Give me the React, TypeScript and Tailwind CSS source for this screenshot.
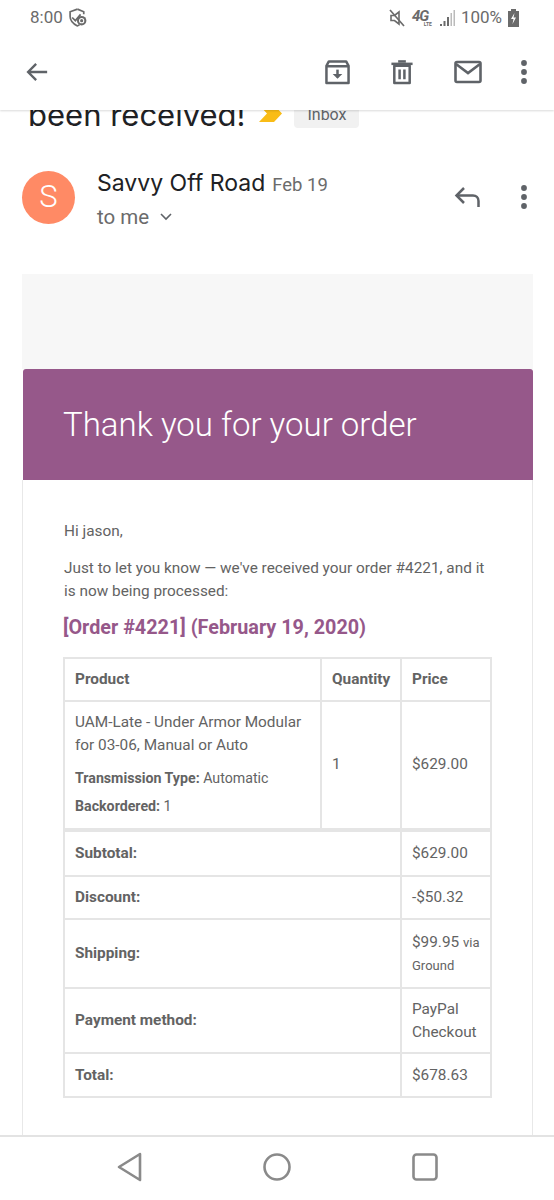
import React from 'react';

const Dots = () => (
  <svg width="24" height="28" viewBox="0 0 24 28" className="fill-[#5f6368]">
    <circle cx="12" cy="5" r="2.9" />
    <circle cx="12" cy="14" r="2.9" />
    <circle cx="12" cy="23" r="2.9" />
  </svg>
);

const StatusBar = () => (
  <div className="flex h-[34px] items-center justify-between pl-[30px] pr-[35px] pt-[1px] text-[17px] text-[#6b6b6b]">
    <div className="flex items-center gap-[5px]">
      <span>8:00</span>
      <svg width="21" height="21" viewBox="0 0 20 20" fill="none" stroke="#6b6b6b" strokeWidth="1.6">
        <path d="M9 2 L2 4.5 V9 C2 13 5 16 9 18 L11 17" />
        <path d="M9 2 L15 4.5 V7" />
        <path d="M4 10 L7 13 L12 7" />
        <circle cx="13" cy="13" r="4.5" fill="#6b6b6b" stroke="none" />
        <circle cx="13" cy="13" r="2" stroke="#fff" strokeWidth="1" />
      </svg>
    </div>
    <div className="flex items-center">
      <svg width="18" height="18" viewBox="0 0 18 18" fill="none" stroke="#6b6b6b" strokeWidth="1.6" className="mr-[6px]">
        <path d="M2 1 L16 17" />
        <path d="M11 3 L6.5 6.5 H3 V11.5 H6.5 L11 15 Z" />
      </svg>
      <div className="mr-[8px] mt-[3px] flex w-[20px] flex-col items-start text-[#6b6b6b]">
        <span className="text-[15px] font-bold italic leading-[11px] tracking-[-1px]">4G</span>
        <span className="self-end text-[5px] font-bold leading-[5px]">LTE</span>
      </div>
      <svg width="16" height="18" viewBox="0 0 16 18" className="mr-[5px] fill-[#6b6b6b]">
        <rect x="0" y="15" width="2" height="2" />
        <rect x="3.5" y="12" width="2" height="5" />
        <rect x="7" y="8" width="2" height="9" />
        <rect x="10.5" y="4" width="1.5" height="13" fill="#bbb" />
        <rect x="13.5" y="1" width="1.5" height="16" fill="#bbb" />
      </svg>
      <span className="mr-[6px]">100%</span>
      <svg width="11" height="18" viewBox="0 0 11 18">
        <path d="M3 0 H8 V2 H11 V18 H0 V2 H3 Z" fill="#6b6b6b" />
        <path d="M6.5 4 L3 10 H5.5 L4.5 15 L8 8.5 H5.5 Z" fill="#fff" />
      </svg>
    </div>
  </div>
);

const Toolbar = () => (
  <div className="flex h-[76px] items-center pl-[26px] pr-[18px]">
    <svg width="22" height="22" viewBox="0 0 26 26" fill="none" stroke="#5f6368" strokeWidth="2.8" className="mr-auto">
      <path d="M25 13 H3 M12 3.5 L2.5 13 L12 22.5" />
    </svg>
    <svg width="25" height="25" viewBox="0 0 26 26" fill="none" stroke="#5f6368" strokeWidth="2.6" className="mr-[40px]">
      <path d="M4 1.5 H22 L24.5 6 V24 H1.5 V6 Z" strokeLinejoin="round" />
      <path d="M1.5 6.5 H24.5" />
      <path d="M13 10 V18" />
      <path d="M8 14.5 L13 19.5 L18 14.5 Z" fill="#5f6368" stroke="none" />
    </svg>
    <svg width="24" height="25" viewBox="0 0 24 26" fill="none" stroke="#5f6368" strokeWidth="2.6" className="mr-[40px]">
      <path d="M4 6 H20 V24 H4 Z" strokeLinejoin="round" />
      <path d="M1 4 H23" />
      <path d="M8 1.5 H16" />
      <path d="M9.5 10 V20 M14.5 10 V20" />
    </svg>
    <svg width="28" height="24" viewBox="0 0 28 24" fill="none" stroke="#5f6368" strokeWidth="2.6" className="mr-[30px]">
      <rect x="1.5" y="2" width="25" height="20" rx="1.5" />
      <path d="M2 4 L14 13 L26 4" />
    </svg>
    <Dots />
  </div>
);

const SubjectTail = () => (
  <div className="-mt-[14px] flex h-[32px] items-center pl-[28px]">
    <span className="mt-[6px] font-['Inter',sans-serif] text-[31px] leading-[36px] text-[#202124]">been received!</span>
    <svg width="23" height="17" viewBox="0 0 23 17" className="ml-[14px] mt-[2px] shrink-0">
      <path d="M0 0 H15 L23 8.5 L15 17 H0 L8 8.5 Z" fill="#f9bc16" />
    </svg>
    <span className="ml-[12px] flex h-[32px] w-[65px] shrink-0 items-end justify-center rounded-[4px] bg-[#f1f1f1] pb-[3px] text-[16px] leading-[20px] text-[#5f6368]">Inbox</span>
  </div>
);

const SenderRow = () => (
  <div className="ml-[22px] mt-[43px] flex h-[53px] items-start pr-[18px]">
    <div className="flex h-[53px] w-[53px] items-center justify-center rounded-full bg-[#ff8a65] text-[31px] font-light text-white">S</div>
    <div className="ml-[22px] mr-auto">
      <div className="flex items-baseline leading-[24px]">
        <span className="font-['Inter',sans-serif] text-[23px] text-[#202124]">Savvy Off Road</span>
        <span className="ml-[7px] text-[18.5px] text-[#6b6b6b]">Feb 19</span>
      </div>
      <div className="mt-[8px] flex items-center text-[20.5px] leading-[24px] text-[#6b6b6b]">
        <span>to me</span>
        <svg width="12" height="8" viewBox="0 0 12 8" fill="none" stroke="#5f6368" strokeWidth="1.6" className="ml-[11px]">
          <path d="M1 1 L6 6 L11 1" />
        </svg>
      </div>
    </div>
    <svg width="26" height="22" viewBox="0 0 26 22" fill="none" stroke="#5f6368" strokeWidth="2.5" className="mr-[32px] mt-[15px]">
      <path d="M24.5 21 V15 C24.5 11.5 22 9.5 19 9.5 H3" />
      <path d="M10 2 L2.5 9.5 L10 17" />
    </svg>
    <div className="mt-[12px]"><Dots /></div>
  </div>
);

const Th = ({ children, colSpan, className = '' }: { children?: React.ReactNode; colSpan?: number; className?: string }) => (
  <th colSpan={colSpan} className={`border-2 border-[#e5e5e5] px-[10px] text-left align-middle font-bold ${className}`}>{children}</th>
);

const Td = ({ children, className = '' }: { children?: React.ReactNode; className?: string }) => (
  <td className={`border-2 border-[#e5e5e5] px-[10px] text-left align-middle ${className}`}>{children}</td>
);

const OrderTable = () => (
  <table className="-ml-[1px] mt-[15px] w-[427px] table-fixed border-collapse text-[15.35px] leading-[23px] text-[#636363]">
    <colgroup>
      <col className="w-[257px]" />
      <col className="w-[80px]" />
      <col className="w-[90px]" />
    </colgroup>
    <thead>
      <tr className="h-[43px]">
        <Th>Product</Th>
        <Th>Quantity</Th>
        <Th>Price</Th>
      </tr>
    </thead>
    <tbody>
      <tr className="h-[129px]">
        <Td className="pb-[2px]">
          <div>UAM-Late - Under Armor Modular for 03-06, Manual or Auto</div>
          <div className="mt-[10px] text-[14.2px]"><strong>Transmission Type:</strong> Automatic</div>
          <div className="mt-[5px] text-[14.2px]"><strong>Backordered:</strong> 1</div>
        </Td>
        <Td className="pb-[2px]">1</Td>
        <Td className="pb-[2px]">$629.00</Td>
      </tr>
    </tbody>
    <tfoot>
      <tr className="h-[46px]">
        <Th colSpan={2} className="border-t-4">Subtotal:</Th>
        <Td className="border-t-4">$629.00</Td>
      </tr>
      <tr className="h-[43px]">
        <Th colSpan={2}>Discount:</Th>
        <Td>-$50.32</Td>
      </tr>
      <tr className="h-[69px]">
        <Th colSpan={2}>Shipping:</Th>
        <Td>
          <div className="whitespace-nowrap">$99.95 <span className="text-[13px]">via</span></div>
          <div className="text-[13px]">Ground</div>
        </Td>
      </tr>
      <tr className="h-[65px]">
        <Th colSpan={2}>Payment method:</Th>
        <Td>PayPal Checkout</Td>
      </tr>
      <tr className="h-[44px]">
        <Th colSpan={2}>Total:</Th>
        <Td>$678.63</Td>
      </tr>
    </tfoot>
  </table>
);

const EmailCard = () => (
  <div className="ml-[22px] mt-[50px] w-[511px]">
    <div className="h-[95px] bg-[#f7f7f7]" />
    <div className="ml-[1px] flex h-[111px] items-center rounded-t-[3px] bg-[#96588a] pl-[40px] text-[33px] font-light text-white">
      Thank you for your order
    </div>
    <div className="border-x border-[#e8e8e8] pl-[41px] pt-[40px] text-[15.35px] leading-[23px] text-[#636363]">
      <p>Hi jason,</p>
      <p className="mt-[14px] w-[428px]">Just to let you know — we've received your order #4221, and it is now being processed:</p>
      <h2 className="-ml-[1px] mt-[11px] text-[19.8px] font-bold leading-[28px] text-[#96588a]">[Order #4221] (February 19, 2020)</h2>
      <OrderTable />
      <div className="mt-[34px] flex text-[20px] font-bold leading-[24px] text-[#7d6a7a]">
        <span className="w-[214px] shrink-0">Billing address</span>
        <span>Shipping address</span>
      </div>
    </div>
  </div>
);

const NavBar = () => (
  <div className="flex h-[65px] shrink-0 items-center border-t-2 border-[#e3e3e3] bg-white pb-[3px] pl-[117px]">
    <svg width="26" height="30" viewBox="0 0 26 30" fill="none" stroke="#8a8a8a" strokeWidth="2.6" strokeLinejoin="round">
      <path d="M23 2 L2 15 L23 28 Z" />
    </svg>
    <svg width="28" height="28" viewBox="0 0 28 28" fill="none" stroke="#8a8a8a" strokeWidth="2.6" className="ml-[120px]">
      <circle cx="14" cy="14" r="12.5" />
    </svg>
    <svg width="26" height="28" viewBox="0 0 26 28" fill="none" stroke="#8a8a8a" strokeWidth="2.6" className="ml-[121px]">
      <rect x="1.5" y="1.5" width="23" height="25" rx="3" />
    </svg>
  </div>
);

export default function App() {
  return (
    <div className="flex h-[1200px] w-[554px] flex-col overflow-hidden bg-white font-['Roboto',sans-serif]">
      <div className="z-10 bg-white shadow-[0_1px_2px_rgba(0,0,0,0.15)]">
        <StatusBar />
        <Toolbar />
      </div>
      <main className="min-h-0 flex-1 overflow-hidden">
        <SubjectTail />
        <SenderRow />
        <EmailCard />
      </main>
      <NavBar />
    </div>
  );
}
